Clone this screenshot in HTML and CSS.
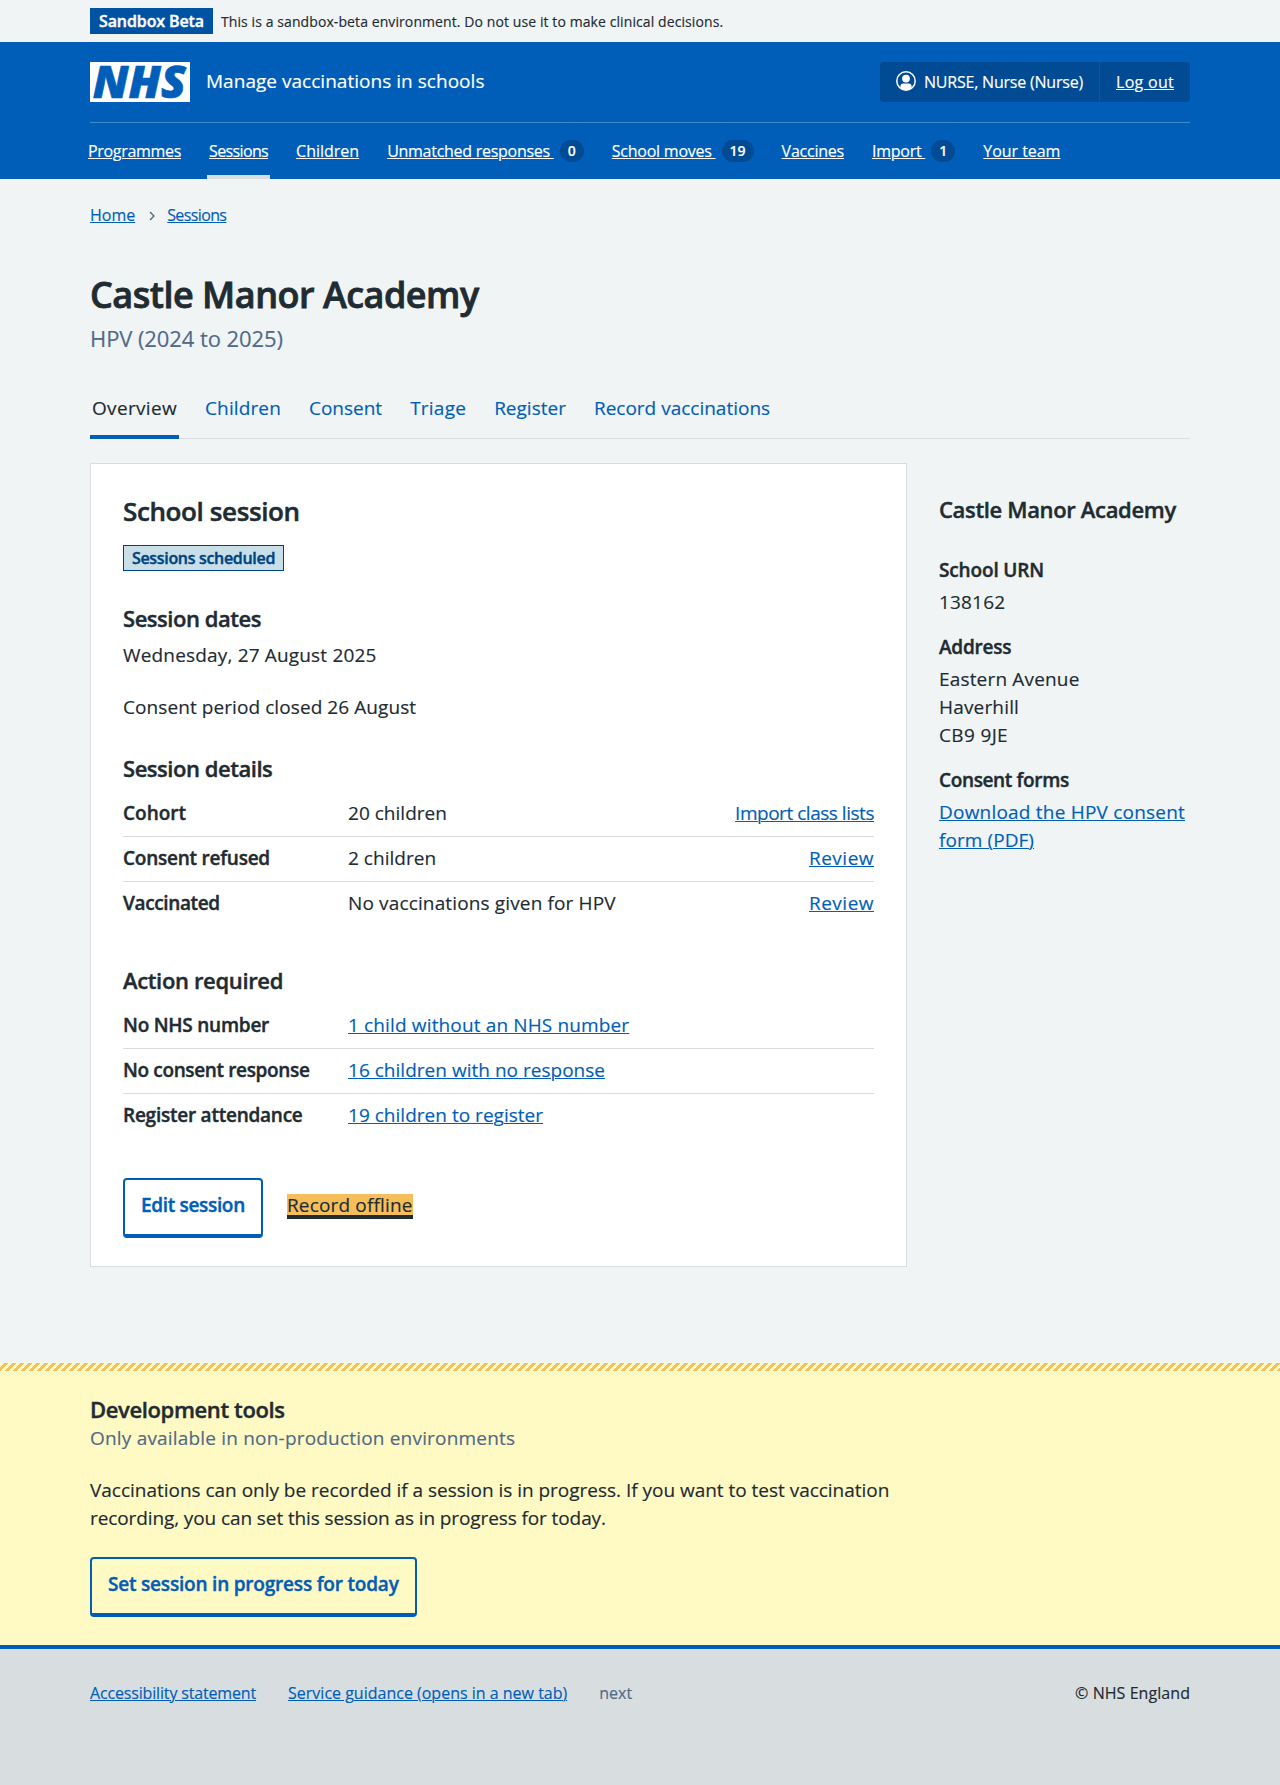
FILE: index.html
```html
<!DOCTYPE html>
<html lang="en">
<head>
<meta charset="utf-8">
<title>Castle Manor Academy – Manage vaccinations in schools</title>
<link rel="stylesheet" href="styles.css">
</head>
<body>
<div class="environment">
  <div class="container environment-inner">
    <strong class="environment-tag">Sandbox Beta</strong>
    <span class="environment-text">This is a sandbox-beta environment. Do not use it to make clinical decisions.</span>
  </div>
</div>

<header class="header">
  <div class="container">
    <div class="header-top">
      <svg class="logo" viewBox="0 0 100 40" width="100" height="40" role="img" aria-label="NHS">
        <rect width="100" height="40" fill="#fff"/>
        <text class="logo-text" x="2.8" y="36.3" textLength="93" lengthAdjust="spacingAndGlyphs">NHS</text>
      </svg>
      <span class="service-name">Manage vaccinations in schools</span>
      <div class="account">
        <div class="account-user">
          <svg class="account-icon" viewBox="0 0 20 20" width="20" height="20" aria-hidden="true">
            <circle cx="10" cy="10" r="9.2" fill="none" stroke="#fff" stroke-width="1.5"/>
            <circle cx="10" cy="7.6" r="3.9" fill="#fff"/>
            <path d="M4.4 17.2V15.6a3 3 0 0 1 3-3h5.2a3 3 0 0 1 3 3v1.6A9 9 0 0 1 10 19.2a9 9 0 0 1-5.6-2z" fill="#fff"/>
          </svg>
          <span>NURSE, Nurse (Nurse)</span>
        </div>
        <a class="account-link" href="#">Log out</a>
      </div>
    </div>
    <nav class="nav">
      <a class="nav-item" href="#"><span class="nav-label">Programmes</span></a>
      <a class="nav-item nav-item-current" href="#"><span class="nav-label">Sessions</span></a>
      <a class="nav-item nav-item-children" href="#"><span class="nav-label">Children</span></a>
      <a class="nav-item nav-item-responses" href="#"><span class="nav-label">Unmatched responses </span><span class="count">0</span></a>
      <a class="nav-item" href="#"><span class="nav-label">School moves </span><span class="count">19</span></a>
      <a class="nav-item" href="#"><span class="nav-label">Vaccines</span></a>
      <a class="nav-item" href="#"><span class="nav-label">Import </span><span class="count">1</span></a>
      <a class="nav-item nav-item-team" href="#"><span class="nav-label">Your team</span></a>
    </nav>
  </div>
</header>

<main class="container main">
  <nav class="breadcrumb">
    <a href="#">Home</a>
    <svg class="chevron" viewBox="0 0 6 10" width="6" height="10" aria-hidden="true"><path d="M1 1l4 4-4 4" fill="none" stroke="#4c6272" stroke-width="1.3"/></svg>
    <a class="breadcrumb-sessions" href="#">Sessions</a>
  </nav>

  <h1 class="title">Castle Manor Academy</h1>
  <p class="caption">HPV (2024 to 2025)</p>

  <nav class="tabs">
    <a class="tab tab-current" href="#">Overview</a>
    <a class="tab tab-children" href="#">Children</a>
    <a class="tab" href="#">Consent</a>
    <a class="tab tab-triage" href="#">Triage</a>
    <a class="tab" href="#">Register</a>
    <a class="tab" href="#">Record vaccinations</a>
  </nav>

  <div class="columns">
    <section class="card">
      <h2 class="card-title">School session</h2>
      <strong class="status">Sessions scheduled</strong>

      <h3 class="heading section-heading">Session dates</h3>
      <p class="date">Wednesday, 27 August 2025</p>
      <p class="consent-period">Consent period closed 26 August</p>

      <h3 class="heading section-heading">Session details</h3>
      <dl class="summary">
        <div class="row"><dt class="snug">Cohort</dt><dd class="snug">20 children</dd><dd class="action"><a class="tight" href="#">Import class lists</a></dd></div>
        <div class="row"><dt>Consent refused</dt><dd class="snug">2 children</dd><dd class="action"><a class="loose" href="#">Review</a></dd></div>
        <div class="row"><dt class="compact">Vaccinated</dt><dd class="medium">No vaccinations given for HPV</dd><dd class="action"><a class="loose" href="#">Review</a></dd></div>
      </dl>

      <h3 class="heading actions-heading">Action required</h3>
      <dl class="summary">
        <div class="row"><dt>No NHS number</dt><dd class="medium"><a href="#">1 child without an NHS number</a></dd></div>
        <div class="row"><dt class="compact">No consent response</dt><dd class="snug"><a href="#">16 children with no response</a></dd></div>
        <div class="row"><dt>Register attendance</dt><dd class="snug"><a href="#">19 children to register</a></dd></div>
      </dl>

      <div class="buttons">
        <a class="button compact" href="#">Edit session</a>
        <a class="focused-link" href="#">Record offline</a>
      </div>
    </section>

    <aside class="aside">
      <h2 class="heading aside-heading">Castle Manor Academy</h2>
      <dl class="facts">
        <dt class="term-urn">School URN</dt>
        <dd>138162</dd>
        <dt>Address</dt>
        <dd>Eastern Avenue<br>Haverhill<br><span class="postcode">CB9 9JE</span></dd>
        <dt class="compact">Consent forms</dt>
        <dd><a class="download" href="#">Download the HPV consent <span class="form-name">form (PDF)</span></a></dd>
      </dl>
    </aside>
  </div>
</main>

<section class="devtools">
  <div class="container">
    <h2 class="heading devtools-heading">Development tools</h2>
    <p class="devtools-note">Only available in non-production environments</p>
    <p class="devtools-text">Vaccinations can only be recorded if a session is in progress. If you want to test vaccination <span class="recording">recording, you can set this session as in progress for today.</span></p>
    <a class="button" href="#">Set session in progress for today</a>
  </div>
</section>

<footer class="footer">
  <div class="container footer-inner">
    <a class="footer-accessibility" href="#">Accessibility statement</a>
    <a href="#">Service guidance (opens in a new tab)</a>
    <span class="footer-version">next</span>
    <span class="footer-copyright">© NHS England</span>
  </div>
</footer>
</body>
</html>
```

FILE: styles.css
```css
* {
  box-sizing: border-box;
}

body {
  margin: 0;
  background: #f0f4f5;
  color: #212b32;
  font: 400 19px/28px "Open Sans", "Noto Sans", sans-serif;
  letter-spacing: 0.17px;
  -webkit-text-stroke: 0.15px;
}

h1, h2, h3, p, dl, dd {
  margin: 0;
}

a {
  color: #005eb8;
  text-decoration: underline;
  text-decoration-thickness: 1px;
  text-underline-offset: 1px;
}

/* Slightly heavier semibold */
h1, h2, h3, dt, strong, .button {
  -webkit-text-stroke: 0.4px;
}

.container {
  width: 1100px;
  margin: 0 auto;
}

/* Letter spacing adjustments */
.snug { letter-spacing: 0.02px; }
.medium { letter-spacing: 0.14px; }
.loose { letter-spacing: 0.49px; }
.tight { letter-spacing: -0.47px; }

/* Environment banner */
.environment {
  padding: 8px 0;
}

.environment-inner {
  display: flex;
  align-items: baseline;
  gap: 8px;
  height: 26px;
}

.environment-tag {
  width: 123px;
  background: #0053a3;
  color: #fff;
  font-size: 16px;
  font-weight: 600;
  line-height: 26px;
  letter-spacing: -0.11px;
  text-align: center;
}

.environment-text {
  font-size: 14px;
  line-height: 20px;
  letter-spacing: 0.09px;
}

/* Header */
.header {
  background: #005eb8;
  color: #fff;
}

.header a {
  color: #fff;
}

.header-top {
  display: flex;
  align-items: flex-start;
  padding: 20px 0;
  height: 80px;
}

.logo {
  display: block;
  overflow: visible;
}

.logo-text {
  fill: #005eb8;
  stroke: #005eb8;
  stroke-width: 0.7px;
  font: italic 800 45px "Open Sans", sans-serif;
  letter-spacing: 0;
}

.service-name {
  margin-left: 16px;
  line-height: 38px;
  letter-spacing: 0.03px;
}

.account {
  display: flex;
  margin-left: auto;
  border-radius: 4px;
  background: #004b94;
  font-size: 16px;
  line-height: 40px;
}

.account-user {
  display: flex;
  gap: 8px;
  width: 219px;
  padding-left: 16px;
  letter-spacing: -0.21px;
}

.account-icon {
  margin-top: 9px;
}

.account-link {
  width: 91px;
  padding-left: 16px;
  border-left: 1px solid #0059ae;
  letter-spacing: 0.29px;
}

.nav {
  display: flex;
  gap: 24px;
  border-top: 1px solid #418bcb;
  font-size: 16px;
  line-height: 56px;
  letter-spacing: -0.24px;
}

.nav .nav-item {
  display: flex;
  align-items: center;
  height: 56px;
  padding: 0 2px;
  text-decoration: none;
  white-space: pre;
}

.nav-item:first-child {
  margin-left: -4px;
  letter-spacing: -0.31px;
}

.nav-item-current {
  letter-spacing: -0.64px;
  box-shadow: inset 0 -4px #d8dde0;
}

.nav-item-children { letter-spacing: 0; }
.nav-item-responses { letter-spacing: -0.27px; }
.nav-item-team { letter-spacing: -0.05px; }

.nav-label {
  text-decoration: underline;
  text-decoration-thickness: 1px;
  text-underline-offset: 1px;
}

.count {
  min-width: 24px;
  margin-left: 6px;
  padding: 0 8px;
  border-radius: 11px;
  background: #004b94;
  font-size: 14px;
  font-weight: 600;
  line-height: 22px;
  letter-spacing: 0;
  text-align: center;
}

/* Breadcrumb */
.breadcrumb {
  display: flex;
  align-items: center;
  padding-top: 24px;
  font-size: 16px;
  line-height: 24px;
  letter-spacing: 0;
}

.chevron {
  margin: 2px 12px 0 14px;
}

.breadcrumb-sessions {
  letter-spacing: -0.62px;
}

/* Page heading */
.title {
  margin-top: 45px;
  font-size: 36px;
  font-weight: 600;
  line-height: 45px;
  letter-spacing: -0.5px;
  -webkit-text-stroke: 0.8px;
}

.caption {
  margin-top: 6px;
  color: #506a87;
  font-size: 22px;
  line-height: 30px;
  letter-spacing: -0.08px;
}

/* Tabs */
.tabs {
  display: flex;
  gap: 24px;
  margin-top: 41px;
  box-shadow: inset 0 -1px #d8dde0;
}

.tab {
  padding: 0 2px 13px;
  border-bottom: 4px solid transparent;
  letter-spacing: 0;
  text-decoration: none;
}

.tab-current {
  border-bottom-color: #005eb8;
  color: #212b32;
  letter-spacing: 0.33px;
}

.tab-children { letter-spacing: 0.12px; }
.tab-triage { letter-spacing: 0.24px; }

/* Columns */
.columns {
  display: flex;
  align-items: flex-start;
  gap: 32px;
  margin-top: 24px;
}

.card {
  width: 817px;
  padding: 30px 32px 28px;
  border: 1px solid #d8dde0;
  background: #fff;
}

.card-title {
  font-size: 26px;
  font-weight: 600;
  line-height: 34px;
  letter-spacing: -0.38px;
  -webkit-text-stroke: 0.5px;
}

.status {
  display: block;
  width: 161px;
  margin-top: 17px;
  border: 1px solid #004281;
  background: #c9dfe8;
  color: #004281;
  font-size: 16px;
  font-weight: 600;
  line-height: 24px;
  letter-spacing: -0.32px;
  text-align: center;
}

.heading {
  font-size: 22px;
  font-weight: 600;
  line-height: 30px;
  letter-spacing: -0.46px;
}

.section-heading { margin-top: 32px; }
.actions-heading { margin-top: 39px; letter-spacing: -0.35px; }
.date { margin-top: 8px; }
.consent-period { margin-top: 24px; letter-spacing: 0.08px; }

.summary {
  margin-top: 9px;
}

.row {
  display: grid;
  grid-template-columns: 225px 1fr auto;
  padding: 7px 0 9px;
  border-bottom: 1px solid #d8dde0;
}

.row:last-child {
  border-bottom: 0;
}

.row dt,
.facts dt {
  font-weight: 600;
  letter-spacing: -0.24px;
}

.row dt.snug { letter-spacing: 0; }
.row dt.compact, .facts dt.compact { letter-spacing: -0.36px; }

.buttons {
  display: flex;
  align-items: flex-start;
  gap: 24px;
  margin-top: 40px;
}

.button {
  display: inline-block;
  height: 60px;
  padding: 11px 16px;
  border: 2px solid #005eb8;
  border-bottom-width: 4px;
  border-radius: 4px;
  font-weight: 600;
  letter-spacing: -0.2px;
  text-decoration: none;
}

.button.compact { letter-spacing: -0.33px; }

.focused-link {
  margin-top: 16px;
  padding-top: 1px;
  border-bottom: 4px solid #212b32;
  background: #f5be5b;
  color: #212b32;
  line-height: 20px;
  text-decoration: none;
}

/* School details */
.aside {
  width: 251px;
  padding-top: 31px;
}

.aside-heading {
  letter-spacing: -0.34px;
}

.facts {
  margin-top: 32px;
}

.facts dt + dd { margin-top: 4px; }
.facts dd + dt { margin-top: 17px; }
.facts dt.term-urn { letter-spacing: -0.15px; }
.postcode { letter-spacing: 0.35px; }
.download { letter-spacing: 0.21px; }
.form-name { letter-spacing: 0.07px; }

/* Development tools */
.devtools {
  margin-top: 96px;
  padding-bottom: 28px;
  background:
    linear-gradient(135deg, transparent 25%, #f5be5b 25% 50%, transparent 50% 75%, #f5be5b 75%) 0 0 / 8px 8px repeat-x,
    #fff9c4;
}

.devtools .container {
  padding-top: 31px;
}

.devtools-heading { letter-spacing: -0.37px; }

.devtools-note {
  color: #506a87;
  letter-spacing: 0.19px;
}

.devtools-text {
  width: 817px;
  margin: 24px 0 25px;
  letter-spacing: -0.02px;
}

.devtools .button {
  display: block;
  width: 327px;
}

.recording { letter-spacing: -0.1px; }

/* Footer */
.footer {
  height: 140px;
  padding-top: 32px;
  border-top: 4px solid #005eb8;
  background: #d8dde0;
  font-size: 16px;
  line-height: 24px;
  letter-spacing: 0;
}

.footer-inner {
  display: flex;
  gap: 32px;
}

.footer-accessibility { letter-spacing: -0.16px; }
.footer-version { color: #506a87; }
.footer-copyright { margin-left: auto; letter-spacing: 0.06px; }
```
